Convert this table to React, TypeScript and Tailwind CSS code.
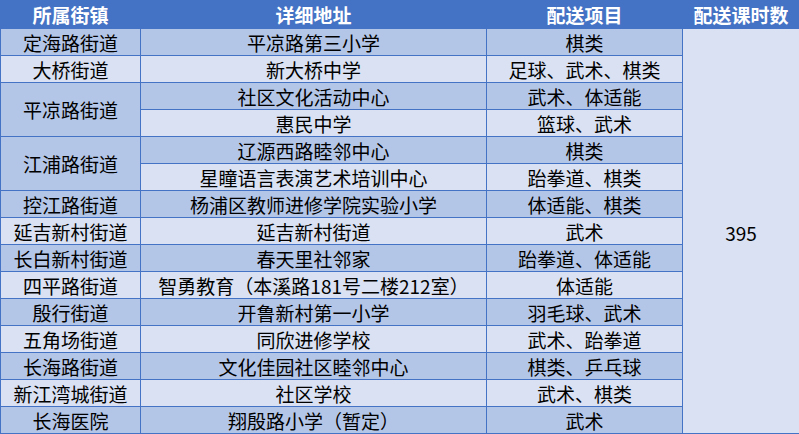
import React from "react";

type Row = {
  street?: string;
  span?: number;
  address: string;
  items: string;
};

const rows: Row[] = [
  { street: "定海路街道", address: "平凉路第三小学", items: "棋类" },
  { street: "大桥街道", address: "新大桥中学", items: "足球、武术、棋类" },
  { street: "平凉路街道", span: 2, address: "社区文化活动中心", items: "武术、体适能" },
  { address: "惠民中学", items: "篮球、武术" },
  { street: "江浦路街道", span: 2, address: "辽源西路睦邻中心", items: "棋类" },
  { address: "星瞳语言表演艺术培训中心", items: "跆拳道、棋类" },
  { street: "控江路街道", address: "杨浦区教师进修学院实验小学", items: "体适能、棋类" },
  { street: "延吉新村街道", address: "延吉新村街道", items: "武术" },
  { street: "长白新村街道", address: "春天里社邻家", items: "跆拳道、体适能" },
  { street: "四平路街道", address: "智勇教育（本溪路181号二楼212室）", items: "体适能" },
  { street: "殷行街道", address: "开鲁新村第一小学", items: "羽毛球、武术" },
  { street: "五角场街道", address: "同欣进修学校", items: "武术、跆拳道" },
  { street: "长海路街道", address: "文化佳园社区睦邻中心", items: "棋类、乒乓球" },
  { street: "新江湾城街道", address: "社区学校", items: "武术、棋类" },
  { street: "长海医院", address: "翔殷路小学（暂定）", items: "武术" },
];

const cell = "flex items-center justify-center leading-none whitespace-nowrap text-black";

export default function App() {
  return (
    <div
      className="w-[799px] h-[434px] bg-[#4472C4] pl-px pb-px grid grid-cols-[139px_345px_195px_116px] grid-rows-[28px_repeat(15,26px)] gap-px text-[19px]"
      style={{ fontFamily: '"Noto Sans CJK SC", "Noto Sans", sans-serif' }}
    >
      {/* Header */}
      <div className="flex items-center justify-center font-bold text-white bg-[#4472C4] leading-none">所属街镇</div>
      <div className="flex items-center justify-center font-bold text-white bg-[#4472C4] leading-none">详细地址</div>
      <div className="flex items-center justify-center font-bold text-white bg-[#4472C4] leading-none">配送项目</div>
      <div className="flex items-center justify-center font-bold text-white bg-[#4472C4] leading-none">配送课时数</div>

      {rows.map((r, i) => {
        const bg = i % 2 === 0 ? "bg-[#B4C6E7]" : "bg-[#D9E1F2]";
        return (
          <React.Fragment key={i}>
            {r.street && (
              <div className={`${cell} ${r.span === 2 ? "row-span-2 bg-[#B4C6E7]" : bg}`}>{r.street}</div>
            )}
            <div className={`${cell} ${bg}`}>{r.address}</div>
            <div className={`${cell} ${bg}`}>{r.items}</div>
            {i === 0 && (
              <div className={`${cell} row-span-15 bg-[#D9E1F2] pt-[2px]`}>395</div>
            )}
          </React.Fragment>
        );
      })}
    </div>
  );
}
